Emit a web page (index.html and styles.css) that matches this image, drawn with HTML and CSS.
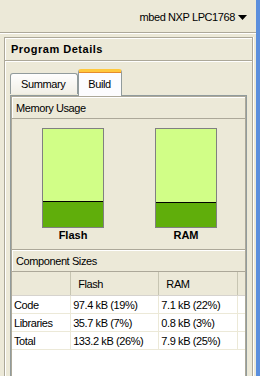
FILE: index.html
```html
<!DOCTYPE html>
<html lang="en">
<head>
    <meta charset="UTF-8">
    <title>Program Details</title>
    <link rel="stylesheet" href="styles.css">
</head>
<body>

    <!-- Target selector -->
    <div class="topbar">
        <span class="target">mbed NXP LPC1768</span>
        <svg class="arrow" width="9" height="5" viewBox="0 0 9 5"><polygon points="0,0 9,0 4.5,5" fill="#000"/></svg>
    </div>

    <!-- Program details panel -->
    <div class="panel">
        <div class="panel-title">Program Details</div>
        <div class="panel-body">
            <div class="tabs">
                <div class="tab">Summary</div>
                <div class="tab active">Build</div>
            </div>
            <div class="tab-pane">
                <div class="section-title">Memory Usage</div>
                <div class="memory">
                    <div class="bar-col">
                        <div class="bar"><div class="used" style="height: 26%"></div></div>
                        <div class="bar-label">Flash</div>
                    </div>
                    <div class="bar-col">
                        <div class="bar"><div class="used" style="height: 25%"></div></div>
                        <div class="bar-label">RAM</div>
                    </div>
                </div>
                <div class="section-title">Component Sizes</div>
                <div class="table-wrap">
                    <table class="sizes">
                        <thead>
                            <tr><th></th><th>Flash</th><th>RAM</th><th class="filler"></th></tr>
                        </thead>
                        <tbody>
                            <tr><td>Code</td><td>97.4 kB (19%)</td><td>7.1 kB (22%)</td><td class="filler"></td></tr>
                            <tr><td>Libraries</td><td>35.7 kB (7%)</td><td>0.8 kB (3%)</td><td class="filler"></td></tr>
                            <tr><td>Total</td><td>133.2 kB (26%)</td><td>7.9 kB (25%)</td><td class="filler"></td></tr>
                        </tbody>
                    </table>
                </div>
            </div>
        </div>
    </div>

</body>
</html>
```
FILE: styles.css
```css
html, body {
    margin: 0;
    overflow: hidden;
}

body {
    font-family: 'Liberation Sans', Arial, sans-serif;
    font-size: 11px;
    letter-spacing: -0.4px;
    color: #000;
    background: #ece9d8;
    border-right: 4px solid #5b8fdd;
    box-sizing: border-box;
    height: 376px;
    display: flex;
    flex-direction: column;
}

/* Top target selector */
.topbar {
    height: 33px;
    flex: none;
    border-bottom: 1px solid #aca899;
    box-shadow: 0 1px 0 #fff;
    display: flex;
    justify-content: flex-end;
    align-items: center;
    padding-right: 9px;
    padding-top: 2px;
    box-sizing: border-box;
}

.target {
    margin-right: 3px;
}

.arrow {
    display: block;
}

/* Panel */
.panel {
    flex: 1;
    min-height: 0;
    margin: 4px 3px 0 4px;
    border: 1px solid #aca899;
    border-bottom: none;
    box-shadow: inset 1px 1px 0 #fff, 1px 0 0 #fff;
    display: flex;
    flex-direction: column;
}

.panel-title {
    flex: none;
    height: 22px;
    line-height: 23px;
    padding-left: 6px;
    font-weight: bold;
    letter-spacing: 0.5px;
    border-bottom: 1px solid #aca899;
    box-shadow: 0 1px 0 #fff;
}

.panel-body {
    flex: 1;
    min-height: 0;
    padding: 7px 5px 0 5px;
    display: flex;
    flex-direction: column;
}

/* Tabs */
.tabs {
    flex: none;
    display: flex;
    align-items: flex-end;
    height: 27px;
}

.tab {
    height: 20px;
    line-height: 20px;
    padding: 0 12px 0 10px;
    border: 1px solid #919b9c;
    border-bottom: none;
    border-radius: 3px 3px 0 0;
    background: linear-gradient(#fefefe, #f1efe6);
    margin-bottom: 1px;
}

.tab.active {
    height: 24px;
    line-height: 24px;
    padding: 0 10px 0 9px;
    border-top: 3px solid #ffc83c;
    background: #fcfcfe;
    margin-bottom: -1px;
    position: relative;
    z-index: 1;
    box-shadow: inset 0 1px 0 #e68b2c;
}

.tab-pane {
    flex: 1;
    min-height: 0;
    border: 1px solid #919b9c;
    border-bottom: none;
    display: flex;
    flex-direction: column;
}

/* Section headers */
.section-title {
    flex: none;
    height: 21px;
    line-height: 22px;
    padding-left: 4px;
    border: 1px solid #aca899;
    box-shadow: inset 1px 1px 0 #fff;
}

/* Memory bars */
.memory {
    flex: none;
    display: flex;
    justify-content: center;
    gap: 51px;
    padding: 9px 0 7px 2px;
    border-left: 1px solid #aca899;
    border-right: 1px solid #aca899;
}

.bar-col {
    display: flex;
    flex-direction: column;
    align-items: center;
}

.bar {
    width: 60px;
    height: 98px;
    border: 1px solid #808080;
    background: #d1fe87;
    display: flex;
    flex-direction: column;
    justify-content: flex-end;
}

.used {
    background: #60ae0b;
    border-top: 1px solid #000;
}

.bar-label {
    font-weight: bold;
    letter-spacing: 0;
    margin-top: 1px;
    line-height: 13px;
}

/* Component table */
.table-wrap {
    flex: 1;
    min-height: 0;
    background: #fff;
    border-left: 1px solid #aca899;
    border-right: 1px solid #aca899;
}

.sizes {
    border-collapse: collapse;
    width: 100%;
}

.sizes th {
    height: 23px;
    background: #ece9d8;
    font-weight: normal;
    text-align: left;
    padding: 0 0 0 7px;
    border-right: 1px solid #c7c5b2;
    border-bottom: 1px solid #d6d3ce;
}

.sizes th:first-child {
    width: 52px;
}

.sizes th:nth-child(2) {
    width: 83px;
}

.sizes th:nth-child(3) {
    width: 73px;
}

.sizes td {
    height: 17px;
    padding: 0 0 0 2px;
    border-right: 1px solid #ece9d8;
    border-bottom: 1px solid #ece9d8;
}

.sizes .filler {
    border-right: none;
}
```
